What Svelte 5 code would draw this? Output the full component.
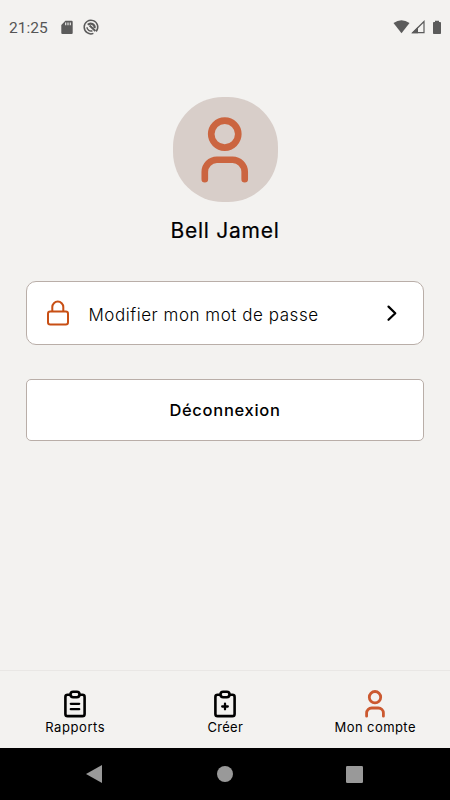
<script>
  const tabs = [
    { id: 'reports', label: 'Rapports', spacing: 0.58 },
    { id: 'create', label: 'Créer', spacing: 0.3 },
    { id: 'account', label: 'Mon compte', spacing: 0.42 }
  ];
</script>

{#snippet person(size, color)}
  <svg width={size * 20 / 28} height={size} viewBox="0 0 20 28" fill="none" stroke={color} stroke-width="2.8" stroke-linecap="round">
    <circle cx="10" cy="7.2" r="5.7" />
    <path d="M1.6 26.2v-3.1a5.1 5.1 0 0 1 5.1-5.1h6.6a5.1 5.1 0 0 1 5.1 5.1v3.1" />
  </svg>
{/snippet}

<div class="screen">
  <header class="status">
    <span class="time">21:25</span>
    <svg class="sd" width="12" height="15" viewBox="0 0 12 15">
      <path fill="#5b5b5b" d="M4.4.8h6.2q1.1 0 1.1 1.1v11q0 1.1-1.1 1.1H1.4q-1.1 0-1.1-1.1V4.9z" />
      <path stroke="#f3f2f0" stroke-width="1.1" d="M4.7 2.4v2.8M7 2.4v2.8M9.3 2.4v2.8" />
    </svg>
    <svg class="sync" width="16" height="16" viewBox="0 0 16 16" fill="none">
      <path stroke="#5b5b5b" stroke-width="1.5" d="M10.4 14.4A6.8 6.8 0 1 1 13.2 12.4" />
      <path stroke="#5b5b5b" stroke-width="2.2" d="M4.8 5.8A4 4 0 0 1 11.6 9.2" />
      <path stroke="#5b5b5b" stroke-width="1.5" d="M4 8.2A4 4 0 0 0 9.4 11.8" />
      <path stroke="#5b5b5b" stroke-width="2" d="m6.6 6.6 5.8 5.4" />
    </svg>
    <div class="signals">
      <svg width="17" height="14" viewBox="0 0 17 14"><path fill="#5b5b5b" d="M.5 3.1Q8.5-2.8 16.5 3.1L8.5 13.2z" /></svg>
      <svg class="cell" width="14" height="14" viewBox="0 0 14 14">
        <path fill="none" stroke="#5b5b5b" stroke-width="1.2" d="M1.7 12.7H13V1.5z" />
        <path fill="#5b5b5b" d="M.6 13.3 7 6.7v6.6z" />
      </svg>
      <svg class="battery" width="10" height="15" viewBox="0 0 10 15"><path fill="#5b5b5b" d="M3 .7h4v1.4h1.2q.8 0 .8.8v10.4q0 .8-.8.8H1.8q-.8 0-.8-.8V2.9q0-.8.8-.8H3z" /></svg>
    </div>
  </header>

  <main>
    <div class="avatar">{@render person(66.5, '#cb6540')}</div>
    <h1>Bell Jamel</h1>

    <button class="row">
      <svg width="24" height="26" viewBox="0 0 24 26" fill="none" stroke="#c84f14" stroke-width="2">
        <rect x="2" y="11.6" width="20" height="12.8" rx="2.2" />
        <path d="M6.3 11.3V7.1a5.5 5.5 0 0 1 11 0v4.2" />
      </svg>
      <span>Modifier mon mot de passe</span>
      <svg class="chevron" width="12" height="18" viewBox="0 0 12 18" fill="none" stroke="#000" stroke-width="2.2" stroke-linecap="round" stroke-linejoin="round"><path d="m2.5 2.6 6.8 6.6-6.8 6.6" /></svg>
    </button>

    <button class="logout"><span>Déconnexion</span></button>
  </main>

  <nav class="tabs">
    {#each tabs as tab}
      <div class="tab">
        {#if tab.id === 'account'}
          {@render person(28, '#cb5930')}
        {:else}
          <svg width="22" height="28" viewBox="0 0 22 28" fill="none" stroke="#000" stroke-width="2.6" stroke-linecap="round" stroke-linejoin="round">
            <path d="M6 4.7H3.6Q1.4 4.7 1.4 6.9v17q0 2.2 2.2 2.2h14.8q2.2 0 2.2-2.2v-17q0-2.2-2.2-2.2H16" />
            <rect x="6.5" y="1.8" width="9" height="5.4" rx="2.7" />
            {#if tab.id === 'reports'}
              <path stroke-width="2.3" d="M6.8 13.8h8.4M6.8 19.2h8.4" />
            {:else}
              <path stroke-width="2.3" d="M11 13.7v5.6M8.2 16.5h5.6" />
            {/if}
          </svg>
        {/if}
        <span style="letter-spacing: {tab.spacing}px">{tab.label}</span>
      </div>
    {/each}
  </nav>

  <footer class="system">
    <svg width="16" height="18" viewBox="0 0 16 18"><path fill="#999" d="M0 9 16 0v18z" /></svg>
    <svg class="home" width="16" height="16" viewBox="0 0 16 16"><circle cx="8" cy="8" r="8" fill="#999" /></svg>
    <svg width="17" height="17" viewBox="0 0 17 17"><rect width="17" height="17" rx="1.2" fill="#999" /></svg>
  </footer>
</div>

<style>
  :global(body) { margin: 0; }
  .screen {
    width: 450px;
    height: 800px;
    display: flex;
    flex-direction: column;
    background: #f3f2f0;
    color: #000;
    font-family: Inter, 'Liberation Sans', sans-serif;
    overflow: hidden;
  }
  svg { display: block; flex: none; overflow: visible; }
  .status {
    box-sizing: border-box;
    height: 54px;
    padding: 0 8px 0 9px;
    display: flex;
    align-items: center;
  }
  .time {
    font: 400 15.5px/20px Roboto, sans-serif;
    color: #555;
    width: 52px;
    padding-top: 2px;
  }
  .sync { margin-left: 10px; }
  .signals { margin-left: auto; display: flex; align-items: center; }
  .cell { margin-left: 1px; }
  .battery { margin-left: 7px; }
  main {
    flex: 1;
    padding: 43px 26px 0;
    display: flex;
    flex-direction: column;
    align-items: center;
  }
  .avatar {
    box-sizing: border-box;
    width: 105px;
    height: 105px;
    padding-top: 1px;
    border-radius: 50px;
    background: #d8cec9;
    display: flex;
    align-items: center;
    justify-content: center;
  }
  h1 {
    margin: 14px 0 0;
    font-size: 21px;
    line-height: 30px;
    font-weight: 400;
    -webkit-text-stroke: .2px #000;
    letter-spacing: .75px;
    white-space: nowrap;
  }
  button {
    box-sizing: border-box;
    width: 398px;
    background: #fff;
    border: 1px solid #b9aea8;
    color: #000;
    font-family: inherit;
    display: flex;
    align-items: center;
  }
  .row {
    margin-top: 35px;
    height: 64px;
    border-radius: 10px;
    padding: 0 25px 0 19px;
    font-size: 17px;
    font-weight: 350;
  }
  .row span { margin-left: 18.5px; line-height: 24px; letter-spacing: .54px; padding-top: 3px; white-space: nowrap; }
  .chevron { margin-left: auto; }
  .logout {
    margin-top: 34px;
    height: 62px;
    border-radius: 5px;
    justify-content: center;
    font-size: 16.5px;
    font-weight: 500;
    letter-spacing: .7px;
  }
  .tabs {
    box-sizing: border-box;
    height: 78px;
    border-top: 1px solid #e9e7e5;
    display: flex;
  }
  .tab {
    width: 150px;
    padding-top: 19px;
    display: flex;
    flex-direction: column;
    align-items: center;
    font-size: 13px;
    line-height: 18px;
  }
  .tab span { padding-left: .5px; }
  .system {
    box-sizing: border-box;
    height: 52px;
    padding: 0 87px 0 86px;
    background: #000;
    display: flex;
    align-items: center;
    justify-content: space-between;
  }
  .home { margin-left: 2px; }
</style>
